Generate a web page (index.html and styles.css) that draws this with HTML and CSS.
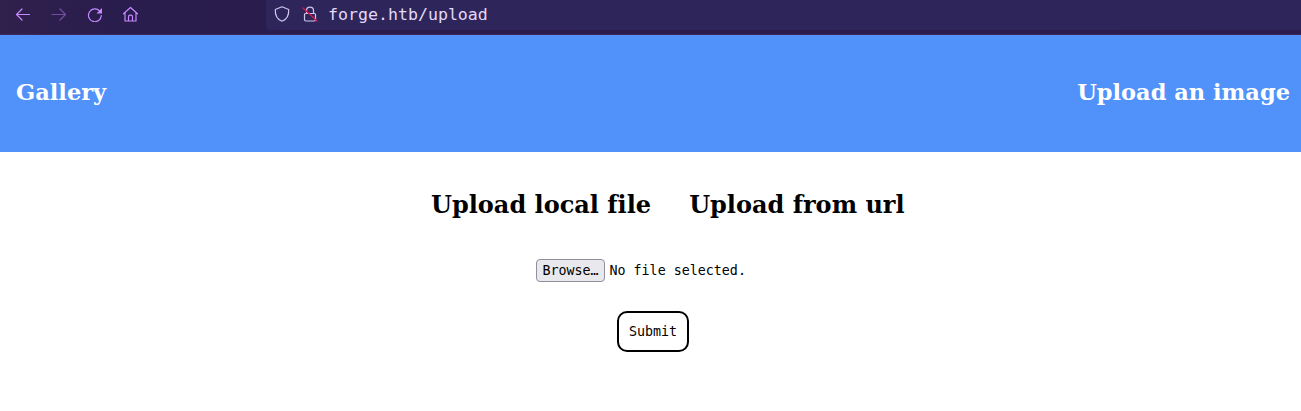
FILE: index.html
```html
<!DOCTYPE html>
<html lang="en">
<head>
<meta charset="utf-8">
<title>Upload an image</title>
<link rel="stylesheet" href="styles.css">
</head>
<body>
<div class="toolbar">
  <div class="nav-icons">
    <svg class="icon" viewBox="0 0 16 16"><path d="M14.500 8.500H1.500M7 3L1.500 8.500 7 14"/></svg>
    <svg class="icon dim" viewBox="0 0 16 16"><path d="M1 8.500h13.500M9 3l5.500 5.500L9 14"/></svg>
    <svg class="icon" viewBox="0 0 16 16"><path d="M12.800 5.200A6.400 6.400 0 1 0 14.300 9.500"/><path class="solid" d="M15 2v5.500H9.500z"/></svg>
    <svg class="icon" viewBox="0 0 16 16"><path d="M.5 7.800L7.500 1.500l7 6.300M2 6.800V15h11V6.800M5.500 15v-4.300q0-1.500 1.500-1.500h1q1.500 0 1.500 1.500V15"/></svg>
  </div>
  <div class="address">
    <svg class="icon" viewBox="0 0 16 16"><path d="M8 .8L1.300 3.500C1 8.500 3 13.300 8 15.300c5-2 7-6.800 6.700-11.800z"/></svg>
    <svg class="icon lock" viewBox="0 0 16 16"><path d="M4.500 7.500V4.600a3.500 3.500 0 0 1 7 0v2.900M3.500 7.500h9q1 0 1 1v5q0 1.500-1.500 1.500H4q-1.500 0-1.500-1.500v-5q0-1 1-1z"/><path class="slash" d="M1 2l14 13"/></svg>
    <span class="url">forge.htb/upload</span>
  </div>
</div>
<header class="site-header">
  <h1 class="link">Gallery</h1>
  <h1 class="link">Upload an image</h1>
</header>
<main class="content">
  <div class="tabs">
    <h2 class="tab">Upload local file</h2>
    <h2 class="tab">Upload from url</h2>
  </div>
  <div class="picker">
    <button class="browse" type="button">Browse…</button>
    <span>No file selected.</span>
  </div>
  <button class="submit" type="button">Submit</button>
</main>
</body>
</html>
```
FILE: styles.css
```css
* { box-sizing: border-box; }
body { margin: 0; height: 411px; overflow: hidden; background: #fff; color: #000; font-family: "DejaVu Serif", serif; }
.toolbar { display: flex; height: 35px; background: linear-gradient(90deg, #30204c 0, #291d4d 110px, #2a1c4e 100%); border-bottom: 1px solid #41285c; }
.nav-icons { display: flex; width: 266px; padding: 6px 0 0 15px; gap: 20px; }
.icon { display: block; flex: none; width: 16px; height: 16px; fill: none; stroke: #c689ff; stroke-width: 1.2; stroke-linecap: round; stroke-linejoin: round; }
.dim { opacity: .45; }
.solid { fill: #c689ff; stroke: none; }
.address { display: flex; flex: 1; height: 30px; padding: 6px 0 0 8px; background: #2e255b; border-bottom-left-radius: 4px; }
.address .icon { stroke: #d0c5eb; }
.address .lock { margin-left: 12px; }
.address .slash { stroke: #e2154f; }
.url { margin-left: 10px; color: #e2d9f8; font: 16.6px/18px "DejaVu Sans Mono", monospace; }
.site-header { display: flex; justify-content: space-between; height: 117px; padding: 43px 11px 0 16px; background: #5191fa; }
.link { margin: 0; color: #fff; font-size: 22.500px; line-height: 28px; font-weight: bold; }
.content { display: flex; flex-direction: column; }
.tabs { display: flex; gap: 38px; padding: 39px 0 0 431px; }
.tab { margin: 0; font-size: 24px; line-height: 28px; white-space: nowrap; font-variant-ligatures: none; }
.picker { display: flex; align-items: center; gap: 4.5px; margin: 40px 0 0 536px; height: 23px; font: 13.333px/16px "DejaVu Sans Mono", monospace; }
.browse { width: 69px; height: 23px; padding: 0; border: 1px solid #8f8f9d; border-radius: 4px; background: #e9e9ed; color: #000; font: inherit; }
.submit { width: 72px; height: 41px; margin: 29px 0 0 617px; padding: 0; border: 2px solid #000; border-radius: 10px; background: #fff; color: #000; font: 13.333px/16px "DejaVu Sans Mono", monospace; }
```
